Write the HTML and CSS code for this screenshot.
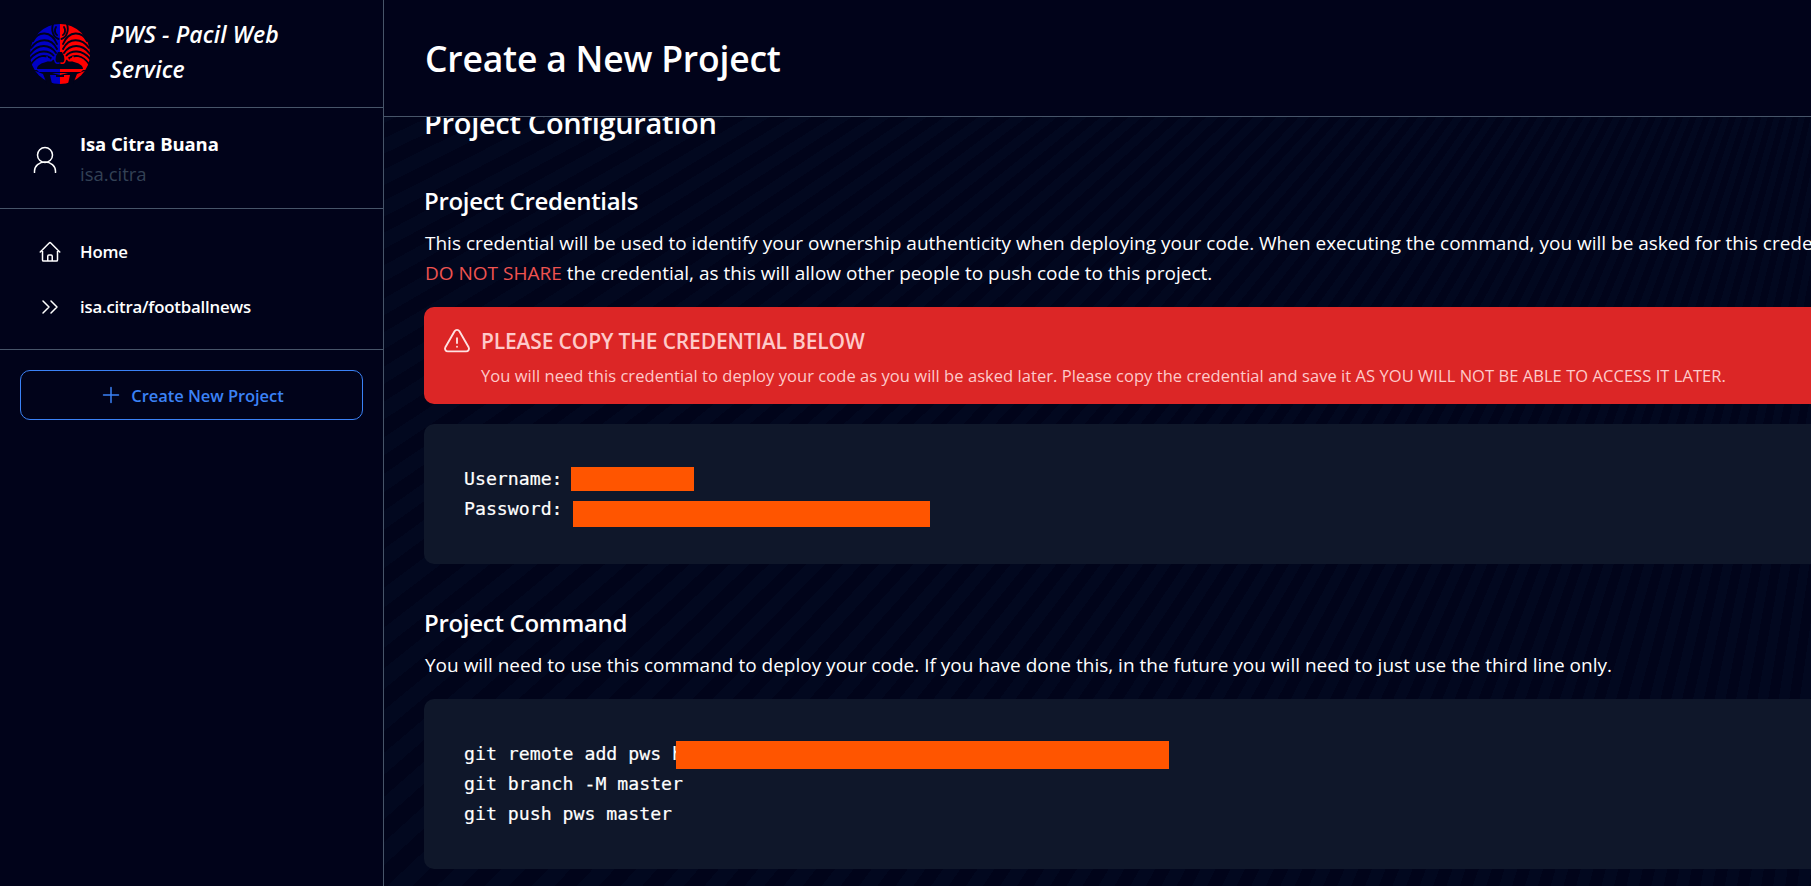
FILE: index.html
```html
<!DOCTYPE html>
<html lang="en">
<head>
<meta charset="utf-8">
<title>Create a New Project</title>
<link rel="stylesheet" href="styles.css">
</head>
<body>
<div class="app">
  <aside class="sidebar">
    <div class="brand">
      <svg class="logo" viewBox="0 0 60 60" aria-hidden="true">
        <defs>
          <g id="makara-half">
            <path fill="currentColor" d="M30 0A30 30 0 0 0 30 60Z"/>
            <g fill="none" stroke="#01031a" stroke-width="1.900" stroke-linecap="round">
              <path d="M28.500 15C23 13 21 6 23 0"/>
              <path d="M26 3C24 6 25 10 27 11"/>
              <path d="M27 20C21 6 8 7 3 17"/>
              <path d="M27 25C21 13 8 14 1 24"/>
              <path d="M26 29C20 20 8 19 0 30"/>
              <path d="M24 32C19 26 8 25 0 35"/>
              <path d="M21 34C16 31 8 30 1 40"/>
            </g>
            <path fill="#01031a" d="M28 28L30 28V45H7C7 41 12 39 16 38C20 37 21 36 20 34L24 36Z"/>
            <path fill="none" stroke="currentColor" stroke-width="1.700" d="M17 33C18 38 22 38 23 33M25 32C24 38 26 40 29 39"/>
            <path fill="#01031a" d="M3 46H7L9 48H30V49H22L30 51V53H26V51H20L22 60H17L13 50Z"/>
            <path fill="none" stroke="currentColor" stroke-width="1.200" d="M8 45.500H29"/>
          </g>
        </defs>
        <use href="#makara-half" class="logo-blue"/>
        <use href="#makara-half" class="logo-red" transform="matrix(-1 0 0 1 60 0)"/>
      </svg>
      <h2 class="brand-title">PWS - Pacil Web Service</h2>
    </div>
    <div class="user">
      <svg class="user-icon" viewBox="0 0 24 28" aria-hidden="true">
        <circle cx="12" cy="10" r="7.500"/>
        <path d="M1.500 27.500V26a10.500 9 0 0 1 21 0v1.500"/>
      </svg>
      <div class="user-text">
        <div class="user-name">Isa Citra Buana</div>
        <div class="user-handle">isa.citra</div>
      </div>
    </div>
    <nav class="nav">
      <a class="nav-item">
        <svg class="nav-icon" viewBox="0 0 24 24" aria-hidden="true"><path d="M2.250 12l8.954-8.955c.44-.439 1.152-.439 1.591 0L21.750 12M4.500 9.750v10.125c0 .621.504 1.125 1.125 1.125H9.750v-4.875c0-.621.504-1.125 1.125-1.125h2.250c.621 0 1.125.504 1.125 1.125V21h4.125c.621 0 1.125-.504 1.125-1.125V9.750M8.250 21h8.250"/></svg>
        <span>Home</span>
      </a>
      <a class="nav-item">
        <svg class="nav-icon" viewBox="0 0 24 24" aria-hidden="true"><path d="M5 6l6 6-6 6M13 6l6 6-6 6"/></svg>
        <span>isa.citra/footballnews</span>
      </a>
    </nav>
    <div class="action">
      <button class="create-btn" type="button">
        <svg class="btn-icon" viewBox="0 0 24 24" aria-hidden="true"><path d="M12 4.500v15m7.500-7.500h-15"/></svg>
        <span>Create New Project</span>
      </button>
    </div>
  </aside>
  <main class="main">
    <header class="topbar"><h1 class="page-title">Create a New Project</h1></header>
    <div class="scroller">
      <div class="content">
        <h2 class="section-title">Project Configuration</h2>
        <h3 class="sub-title first">Project Credentials</h3>
        <p class="para">This credential will be used to identify your ownership authenticity when deploying your code. When executing the command, you will be asked for this credential.<br><span class="danger">DO NOT SHARE</span> the credential, as this will allow other people to push code to this project.</p>
        <div class="alert">
          <svg class="alert-icon" viewBox="0 0 24 24" aria-hidden="true"><path d="M12 9v3.750m-9.303 3.376c-.866 1.500.217 3.374 1.948 3.374h14.710c1.730 0 2.813-1.874 1.948-3.374L13.949 3.378c-.866-1.500-3.032-1.500-3.898 0L2.697 16.126zM12 15.750h.007v.008H12v-.008z"/></svg>
          <div class="alert-title">PLEASE COPY THE CREDENTIAL BELOW</div>
          <div class="alert-desc">You will need this credential to deploy your code as you will be asked later. Please copy the credential and save it AS YOU WILL NOT BE ABLE TO ACCESS IT LATER.</div>
        </div>
        <div class="code-box">
          <pre class="code">Username:
Password:</pre>
          <span class="redact redact-user"></span>
          <span class="redact redact-pass"></span>
        </div>
        <h3 class="sub-title">Project Command</h3>
        <p class="para">You will need to use this command to deploy your code. If you have done this, in the future you will need to just use the third line only.</p>
        <div class="code-box code-box-tight">
          <pre class="code">git remote add pws h
git branch -M master
git push pws master</pre>
          <span class="redact redact-url"></span>
        </div>
      </div>
    </div>
  </main>
</div>
</body>
</html>
```
FILE: styles.css
```css
* { box-sizing: border-box; }
html, body { height: 100%; }
body {
  margin: 0;
  background: #01031a;
  color: #fff;
  font-family: "Open Sans", "Noto Sans", sans-serif;
  overflow: hidden;
}
h1, h2, h3, p, pre { margin: 0; }
svg { display: block; flex: none; fill: none; stroke: currentColor; stroke-width: 1.5; stroke-linecap: round; stroke-linejoin: round; }

.app { display: flex; height: 100vh; }

/* Sidebar */
.sidebar { width: 384px; flex: none; border-right: 1px solid #475569; background: #01031a; }
.brand { height: 108px; display: flex; align-items: center; padding-left: 30px; gap: 20px; border-bottom: 1px solid #475569; }
.logo { width: 60px; height: 60px; stroke: none; fill: currentColor; }
.logo-blue { color: #0000c4; }
.logo-red { color: #ff0000; }
.brand-title { width: 215px; margin-top: -4px; font-size: 23px; line-height: 35px; font-weight: 600; font-style: italic; letter-spacing: .15px; }

.user { height: 101px; display: flex; align-items: center; padding-left: 33px; gap: 23px; border-bottom: 1px solid #475569; }
.user-icon { width: 24px; height: 28px; margin-top: 1px; }
.user-text { padding-top: 1px; }
.user-name { font-size: 18.500px; line-height: 30px; font-weight: 700; letter-spacing: -.1px; }
.user-handle { font-size: 18.500px; line-height: 30px; color: #334155; }

.nav { height: 141px; padding: 15px 0; border-bottom: 1px solid #475569; }
.nav-item { height: 55px; display: flex; align-items: center; padding-left: 38px; gap: 18px; font-size: 16.800px; font-weight: 600; letter-spacing: -.2px; }
.nav-icon { width: 24px; height: 24px; }

.action { padding: 20px 20px 0; }
.create-btn { width: 343px; height: 50px; display: flex; align-items: center; justify-content: center; gap: 8px; background: transparent; border: 1px solid #3b82f6; border-radius: 10px; color: #3b82f6; font: 600 16.500px "Open Sans", sans-serif; letter-spacing: -.05px; padding: 0; }
.btn-icon { width: 24px; height: 24px; }

/* Main */
.main { flex: 1; min-width: 0; display: flex; flex-direction: column; }
.topbar { height: 117px; flex: none; display: flex; align-items: center; padding-left: 41px; border-bottom: 1px solid #475569; background: #01031a; }
.page-title { font-size: 35.500px; font-weight: 600; line-height: 50px; letter-spacing: -.2px; }
.scroller {
  flex: 1;
  min-height: 0;
  overflow: hidden;
  background-color: #01041a;
  background-image: repeating-conic-gradient(from 180deg at 1603px -733px, #01041a 0deg .45deg, #02081f .45deg .9deg);
}
.content { width: 1600px; margin-top: -17px; margin-left: 40px; }
.section-title { font-size: 29px; line-height: 45px; font-weight: 600; letter-spacing: -.3px; }
.sub-title { margin-top: 40px; margin-bottom: 8px; font-size: 24px; line-height: 38px; font-weight: 600; letter-spacing: -.3px; }
.sub-title.first { margin-top: 37px; }
.para { margin-left: 1px; font-size: 19px; line-height: 30px; letter-spacing: 0; white-space: nowrap; }
.danger { color: #ef5350; }

.alert {
  margin-top: 19px;
  height: 97px;
  padding: 20px 18px;
  display: grid;
  grid-template-columns: 30px 1fr;
  column-gap: 9px;
  row-gap: 7px;
  background: #dc2626;
  border-radius: 10px;
  color: #fecaca;
}
.alert-icon { width: 30px; height: 30px; color: #fee2e2; }
.alert-title { font-size: 21px; line-height: 28px; font-weight: 600; letter-spacing: -.15px; }
.alert-desc { grid-column: 2; font-size: 16.500px; line-height: 24px; letter-spacing: .05px; white-space: nowrap; }

.code-box { position: relative; margin-top: 20px; padding: 40px; background: #0f172a; border-radius: 10px; }
.code-box-tight { margin-top: 19px; }
.code { font-family: "DejaVu Sans Mono", "Liberation Mono", monospace; font-size: 18.200px; line-height: 30px; color: #fff; -webkit-text-stroke: .2px #fff; }
.redact { position: absolute; background: #ff5500; }
.redact-user { left: 147px; top: 43px; width: 123px; height: 24px; }
.redact-pass { left: 149px; top: 77px; width: 357px; height: 26px; }
.redact-url { left: 252px; top: 42px; width: 493px; height: 28px; }
```
